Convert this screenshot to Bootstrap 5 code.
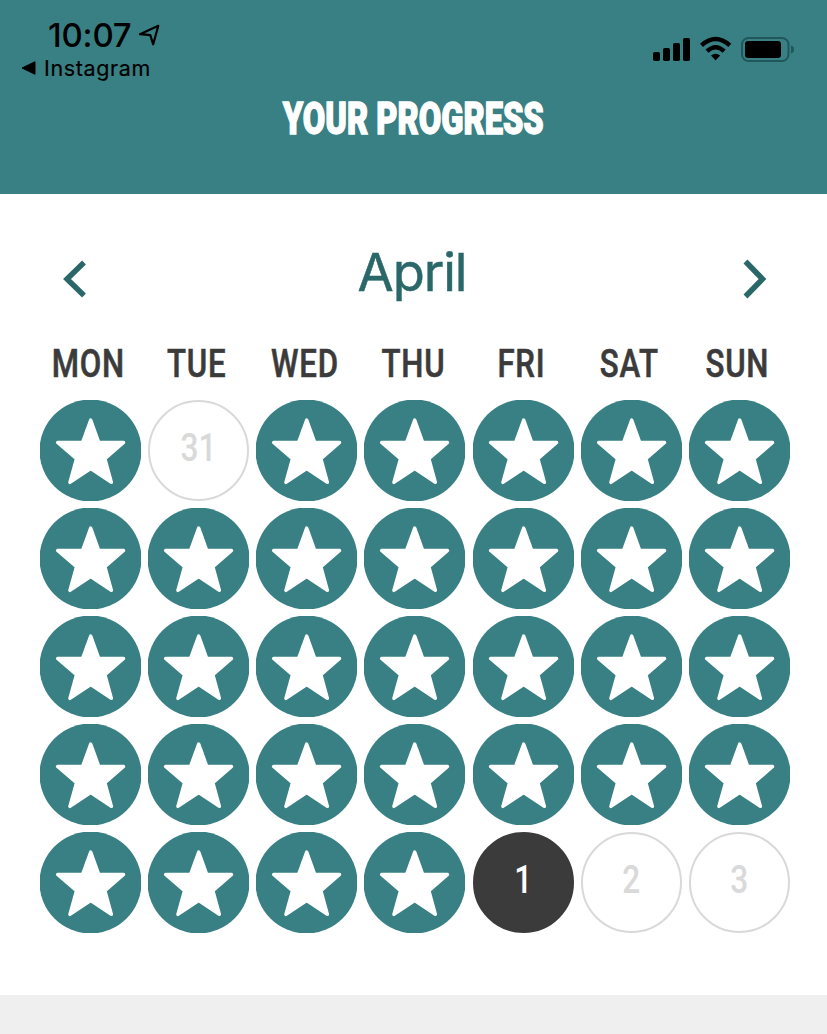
<!DOCTYPE html>
<html lang="en">
<head>
<meta charset="utf-8">
<meta name="viewport" content="width=device-width, initial-scale=1">
<title>Your Progress</title>
<link href="https://cdn.jsdelivr.net/npm/bootstrap@5.3.0/dist/css/bootstrap.min.css" rel="stylesheet">
<style>
  :root { --teal: #398084; --teal-dark: #2a6769; --ink: #3b3b3b; --mute: #d9d9d9; }
  body { font-family: Inter, "Liberation Sans", sans-serif; background: #efefef; height: 1034px; overflow: hidden; }
  .app-header { background: var(--teal); height: 194px; }
  .status { height: 84px; padding: 17px 32px 0 21px; color: #000; }
  .clock { font-size: 33px; line-height: 36px; font-weight: 500; padding-left: 27px; letter-spacing: -.2px; gap: 6px; }
  .back { font-size: 21.5px; line-height: 28px; letter-spacing: .65px; gap: 8px; margin-top: 1px; -webkit-text-stroke: .2px; }
  .signals { gap: 9px; margin-top: 19px; }
  .title { font-family: Roboto, sans-serif; font-weight: 900; font-size: 44.5px; line-height: 54px; margin-top: 8px; color: #fff; -webkit-text-stroke: 1.4px #fff; }
  .narrow { display: inline-block; white-space: nowrap; }
  .title .narrow { transform: scaleX(.732); margin: 0 -60px; }
  .calendar { height: 801px; padding: 45px 37px 0; }
  .month-bar { height: 70px; padding: 0 21px 0 24px; }
  .month { font-size: 52.5px; line-height: 60px; color: var(--teal-dark); letter-spacing: -1.1px; margin: -4px 6px 0 0; font-weight: 400; -webkit-text-stroke: .5px; }
  .arrow { margin-top: 9px; }
  .days { display: grid; grid-template-columns: repeat(7, 108.15px); justify-items: center; margin: 11px 0 0 -.5px; }
  .weekday { font-family: Roboto, sans-serif; font-weight: 500; font-size: 39.5px; line-height: 48px; color: var(--ink); height: 79.5px; padding-top: 20px; margin-left: -4px; -webkit-text-stroke: .6px; }
  .weekday .narrow { transform: scaleX(.79); margin: 0 -20px; letter-spacing: 1px; }
  .day .narrow { transform: scaleX(.8); margin: 0 -20px; }
  .day { width: 101px; height: 101px; margin-bottom: 7.15px; overflow: hidden; }
  .day svg { display: block; }
  .date { border: 2px solid var(--mute); color: var(--mute); font-family: Roboto, sans-serif; font-weight: 500; font-size: 39.5px; line-height: 92px; }
  .today { background: var(--ink); border-color: var(--ink); color: #fff; }
</style>
</head>
<body>
<svg width="0" height="0" class="position-absolute" aria-hidden="true">
  <symbol id="star" viewBox="0 0 101 101">
    <circle cx="50.5" cy="50.5" r="51" fill="#398084"/>
    <path d="M50.7 20.1 58.8 42.5 83.6 42.5 64.9 58.7 71.4 82.4 50.7 68.6 29.9 82.4 36.5 58.7 17.6 42.5 42.5 42.5Z" fill="#fff" stroke="#fff" stroke-width="3.4" stroke-linejoin="round"/>
  </symbol>
</svg>
<header class="app-header">
  <div class="status d-flex justify-content-between align-items-start">
    <div>
      <div class="clock d-flex align-items-center"><span>10:07</span>
        <svg width="22" height="22" viewBox="0 0 22 22" fill="none" stroke="#000" stroke-width="2.2" stroke-linejoin="round"><path d="M20.3 1.8 2 10.2 12.3 11.2 15.2 20.3Z"/></svg>
      </div>
      <div class="back d-flex align-items-center">
        <svg width="15" height="14" viewBox="0 0 15 14"><path d="M1 7 14 .7V13.3Z" stroke="#000" stroke-linejoin="round"/></svg><span>Instagram</span>
      </div>
    </div>
    <div class="signals d-flex">
      <svg width="38" height="27" viewBox="0 0 38 27"><rect x="0" y="16" width="7" height="9" rx="1.7"/><rect x="10" y="12" width="7" height="13" rx="1.7"/><rect x="20" y="7" width="7" height="18" rx="1.7"/><rect x="30" y="2" width="7" height="23" rx="1.7"/></svg>
      <svg width="32" height="27" viewBox="0 0 32 27" fill="none" stroke="#000" stroke-width="4.4"><path d="M1.5 9.3Q15.5-3.2 29.8 9.3M7 15.2Q15.6 7.2 24.2 15.2"/><path d="M11 19.5Q15.6 16 20.2 19.5L15.6 24.5Z" fill="#000" stroke="none"/></svg>
      <svg width="54" height="27" viewBox="0 0 54 27"><rect x="1" y="2" width="46.5" height="23" rx="6.5" fill="none" stroke="#20575a" stroke-width="2"/><rect x="4" y="5" width="36" height="17" rx="3"/><path d="M50 9.5Q53 10 53 13.5T50 17.5Z" fill="#20575a"/></svg>
    </div>
  </div>
  <h1 class="title text-center mb-0"><span class="narrow">YOUR PROGRESS</span></h1>
</header>
<main class="calendar bg-white">
  <div class="month-bar d-flex justify-content-between align-items-center">
    <svg class="arrow" width="27" height="40" viewBox="0 0 27 40" fill="none" stroke="#2a6769" stroke-width="5.5"><path d="M23 3.5 6 20 23 36.5"/></svg>
    <h2 class="month">April</h2>
    <svg class="arrow" width="27" height="40" viewBox="0 0 27 40" fill="none" stroke="#2a6769" stroke-width="5.5"><path d="M3.5 2.5 20.5 20 3.5 37.5"/></svg>
  </div>
  <div class="days" id="days"></div>
</main>
<script src="https://cdn.jsdelivr.net/npm/bootstrap@5.3.0/dist/js/bootstrap.bundle.min.js"></script>
<script>
  const names = ['MON', 'TUE', 'WED', 'THU', 'FRI', 'SAT', 'SUN'];
  const dates = { 1: '31', 32: '1', 33: '2', 34: '3' };
  let html = names.map(n => `<div class="weekday"><span class="narrow">${n}</span></div>`).join('');
  for (let i = 0; i < 35; i++) {
    html += dates[i]
      ? `<div class="day date rounded-circle text-center ${i === 32 ? 'today' : ''}"><span class="narrow">${dates[i]}</span></div>`
      : '<div class="day"><svg width="101" height="101"><use href="#star"/></svg></div>';
  }
  document.getElementById('days').innerHTML = html;
</script>
</body>
</html>
